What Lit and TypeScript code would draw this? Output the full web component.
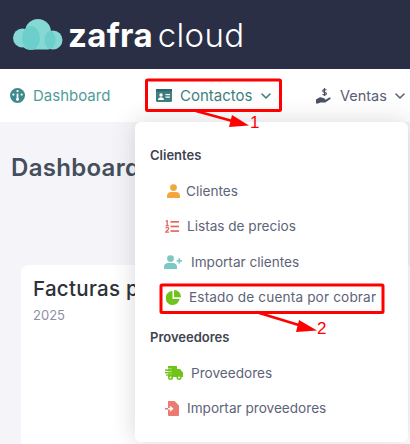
import { LitElement, html, css, svg } from "lit";
import { customElement } from "lit/decorators.js";

const chevron = html`<svg class="chev" viewBox="0 0 12 12" width="12" height="12"><path d="M2 4l4 4 4-4" fill="none" stroke="currentColor" stroke-width="1.6" stroke-linecap="round" stroke-linejoin="round"/></svg>`;

@customElement("app-root")
export class AppRoot extends LitElement {
  static styles = css`
    :host { display: block; width: 410px; height: 444px; overflow: hidden; position: relative; background: #f5f5f9; font-family: Inter, "Open Sans", sans-serif; }
    .top { height: 69px; background: #2a2f45; display: flex; align-items: center; padding: 0 0 0 13px; gap: 5px; box-sizing: border-box; }
    .logo-text { font-family: Inter, sans-serif; font-size: 33px; line-height: 36px; color: #fff; display: flex; align-items: baseline; gap: 5px; letter-spacing: 0.3px; }
    .logo-text b { font-weight: 700; }
    .logo-text span { font-weight: 300; }
    .nav { height: 53px; background: #fff; display: flex; align-items: center; padding-left: 10px; box-sizing: border-box; white-space: nowrap; }
    .nav-item { display: flex; align-items: center; font-size: 15px; color: #5a6077; }
    .nav-item.teal { color: #4f9c9a; }
    .nav-item.dash { gap: 8px; width: 146px; }
    .nav-item.cont { gap: 8px; width: 160px; color: #3f7f80; }
    .nav-item.ventas { gap: 7px; font-size: 14.5px; }
    .main { padding: 31px 11px 0 21px; position: relative; }
    h1 { margin: 0 0 0 -10px; font-size: 24px; line-height: 30px; font-weight: 600; color: #454e5c; white-space: nowrap; letter-spacing: .3px; }
    .card { margin-top: 82px; background: #fff; border-radius: 8px; height: 220px; width: 430px; padding: 11px 12px; box-sizing: border-box; }
    .card h2 { margin: 0; font-size: 20.5px; line-height: 26px; font-weight: 500; color: #2e3238; letter-spacing: .3px; }
    .card p { margin: 5px 0 0; font-size: 13px; line-height: 16px; color: #8f8fa8; }
    .menu { position: absolute; left: 135px; top: 122px; width: 273px; height: 320px; background: #fff; border-radius: 6px; box-shadow: 0 0 24px rgba(40,40,60,.18); padding: 23px 0 0 15px; box-sizing: border-box; }
    .group { font-size: 13px; font-weight: 600; color: #40444f; line-height: 20px; }
    .group.g2 { margin-top: 12px; }
    .row { display: flex; align-items: center; height: 35.5px; padding-left: 14px; font-size: 13.6px; color: #5d6378; white-space: nowrap; }
    .row.first { margin-top: 8px; }
    .row.wide { letter-spacing: .15px; }
    .row svg { flex: none; }
    .ic { display: inline-flex; width: 20px; justify-content: flex-start; margin-right: 2px; }
    .ic.w2 { margin-right: 7px; }
    .ic.w3 { margin-right: 3px; margin-left: 2px; }
    .ic.p { margin-right: 5px; margin-left: 2px; }
    .ic.w4 { margin-left: 1px; margin-right: 2px; }
    .overlay { position: absolute; left: 0; top: 0; width: 410px; height: 444px; pointer-events: none; }
    .num { position: absolute; color: #f00; font-family: "Liberation Sans", sans-serif; font-size: 17px; line-height: 18px; }
    .n1 { left: 250px; top: 114px; }
    .n2 { left: 317px; top: 320px; }
  `;

  render() {
    return html`
      <div class="top">
        <svg width="50" height="32" viewBox="0 0 50 32">
          <g fill="#86d8d5">
            <circle cx="9.5" cy="19" r="9.5"/>
            <circle cx="25" cy="13" r="13"/>
            <circle cx="40" cy="21" r="9.5"/>
            <rect x="10" y="16" width="30" height="14.5" rx="5"/>
          </g>
          <ellipse cx="18" cy="19" rx="9" ry="12" fill="#6dcfcc"/>
          <ellipse cx="37" cy="21" rx="5.5" ry="9" fill="#6dcfcc"/>
        </svg>
        <div class="logo-text"><b>zafra</b><span>cloud</span></div>
      </div>
      <div class="nav">
        <div class="nav-item teal dash">
          <svg width="15" height="15" viewBox="0 0 16 16"><circle cx="8" cy="8" r="8" fill="#3f8a8c"/><circle cx="8" cy="3.2" r="1.2" fill="#fff"/><circle cx="3.6" cy="7" r="1.2" fill="#fff"/><circle cx="12.4" cy="7" r="1.2" fill="#fff"/><path d="M8 6v5" stroke="#fff" stroke-width="1.8"/><circle cx="8" cy="12" r="1.6" fill="#fff"/></svg>
          Dashboard
        </div>
        <div class="nav-item cont">
          <svg width="16" height="13" viewBox="0 0 16 13"><rect width="16" height="13" rx="1.5" fill="#3f7f80"/><rect x="0" y="0" width="16" height="2.4" fill="#2e6a6c"/><circle cx="5" cy="6" r="1.7" fill="#fff"/><path d="M2 11c0-2 1.3-2.8 3-2.8S8 9 8 11z" fill="#fff"/><rect x="9.5" y="5" width="4.5" height="1.2" fill="#fff"/><rect x="9.5" y="7.5" width="4.5" height="1.2" fill="#fff"/></svg>
          Contactos ${chevron}
        </div>
        <div class="nav-item ventas">
          <svg width="17" height="17" viewBox="0 0 17 17"><path d="M0 12.5l3-1.8c1.2-.7 2.3-.6 3.5 0l2 .7c1.2.3 1 1.6-.2 1.5l-2.3-.2 3 .2 4.3-2.4c1.1-.5 2 .7 1 1.5l-4.3 3c-.6.4-1.2.5-2 .5H4.5L2 16.5H0z" fill="#4b5166"/><path d="M10.5 3.2C9.6 2.2 6.8 2.2 6.8 3.9c0 1.7 3.6 1 3.6 2.8 0 1.6-2.9 1.5-3.8.5M8.5 1v8" fill="none" stroke="#4b5166" stroke-width="1.2"/></svg>
          Ventas ${chevron}
        </div>
      </div>
      <div class="main">
        <h1>Dashboard</h1>
        <div class="card">
          <h2>Facturas p</h2>
          <p>2025</p>
        </div>
      </div>
      <div class="menu">
        <div class="group">Clientes</div>
        <div class="row first">
          <span class="ic"><svg width="13" height="14" viewBox="0 0 13 14" style="margin-left:3px"><circle cx="6.5" cy="3.6" r="3.4" fill="#f2a63c"/><path d="M0 14v-2c0-2.4 1.8-4 4-4h5c2.2 0 4 1.6 4 4v2z" fill="#f2a63c"/></svg></span>Clientes
        </div>
        <div class="row">
          <span class="ic w4"><svg width="14" height="13" viewBox="0 0 14 13"><g fill="none" stroke="#e8675f" stroke-width="1.3"><path d="M.8 1.4l1.4-.7v5M.6 5.7h3.2"/><path d="M.7 8.2c.6-1.2 3-1 3 .4 0 1.2-2.6 2-3 3.6h3.3"/></g><g fill="#e8675f"><rect x="5.5" y="1" width="8.5" height="1.7"/><rect x="5.5" y="5.6" width="8.5" height="1.7"/><rect x="5.5" y="10.2" width="8.5" height="1.7"/></g></svg></span>Listas de precios
        </div>
        <div class="row">
          <span class="ic w2"><svg width="18" height="14" viewBox="0 0 18 14"><g fill="#7cc9c4"><circle cx="6.5" cy="3.6" r="3.4"/><path d="M0 14v-2c0-2.4 1.8-4 4-4h5c2.2 0 4 1.6 4 4v2z"/><rect x="12.6" y="5" width="5.4" height="1.7"/><rect x="14.4" y="3.2" width="1.7" height="5.4"/></g></svg></span>Importar clientes
        </div>
        <div class="row wide">
          <span class="ic w3"><svg width="15" height="15" viewBox="0 0 15 15"><path d="M6.5 1A7 7 0 1 0 13.6 9H6.5z" fill="#6fc31a"/><path d="M8 0a7 7 0 0 1 7 7.2H8z" fill="#6fc31a"/></svg></span>Estado de cuenta por cobrar
        </div>
        <div class="group g2">Proveedores</div>
        <div class="row first">
          <span class="ic p"><svg width="18" height="14" viewBox="0 0 18 14" style="margin-left:-1px"><g fill="#6fc31a"><path d="M3 0h9v11H3z"/><path d="M12 3h3l3 3.5V11h-6z"/><circle cx="5.5" cy="11.5" r="2.5"/><circle cx="14" cy="11.5" r="2.5"/></g><g fill="#fff"><rect x="0" y="2.6" width="6.5" height=".7"/><rect x="0" y="5" width="6.5" height=".7"/><rect x="0" y="7.6" width="6.5" height=".7"/><circle cx="5.5" cy="11.5" r="1"/><circle cx="14" cy="11.5" r="1"/></g><g fill="#6fc31a"><rect x="0" y="3.3" width="6" height="1.5"/><rect x="0" y="5.9" width="6" height="1.5"/><rect x="1" y="8.4" width="5" height="1.3"/></g></svg></span>Proveedores
        </div>
        <div class="row">
          <span class="ic w4"><svg width="14" height="15" viewBox="0 0 14 15"><path d="M3 0h6.5L14 4.5V14a1 1 0 0 1-1 1H4a1 1 0 0 1-1-1z" fill="#ea7a72"/><path d="M3 7.8h4M5 5.5l2.5 2.3-2.5 2.3" fill="none" stroke="#fff" stroke-width="1.4"/><path d="M0 7.8h3" stroke="#e8675f" stroke-width="1.4"/></svg></span>Importar proveedores
        </div>
      </div>
      <svg class="overlay" viewBox="0 0 410 444">
        ${svg`<rect x="146.5" y="80" width="134" height="30.5" rx="1" fill="none" stroke="#f00" stroke-width="3"/>
        <rect x="161" y="285" width="222" height="27.5" rx="1" fill="none" stroke="#f00" stroke-width="3"/>
        <path d="M196 111l40 11" stroke="#f00" stroke-width="2.5"/>
        <path d="M249 125.5l-17-10.5-3 12z" fill="#f00"/>
        <path d="M256 312l46 14" stroke="#f00" stroke-width="2.5"/>
        <path d="M317 330.5l-18-10.5-3 12z" fill="#f00"/>`}
      </svg>
      <div class="num n1">1</div>
      <div class="num n2">2</div>
    `;
  }
}
